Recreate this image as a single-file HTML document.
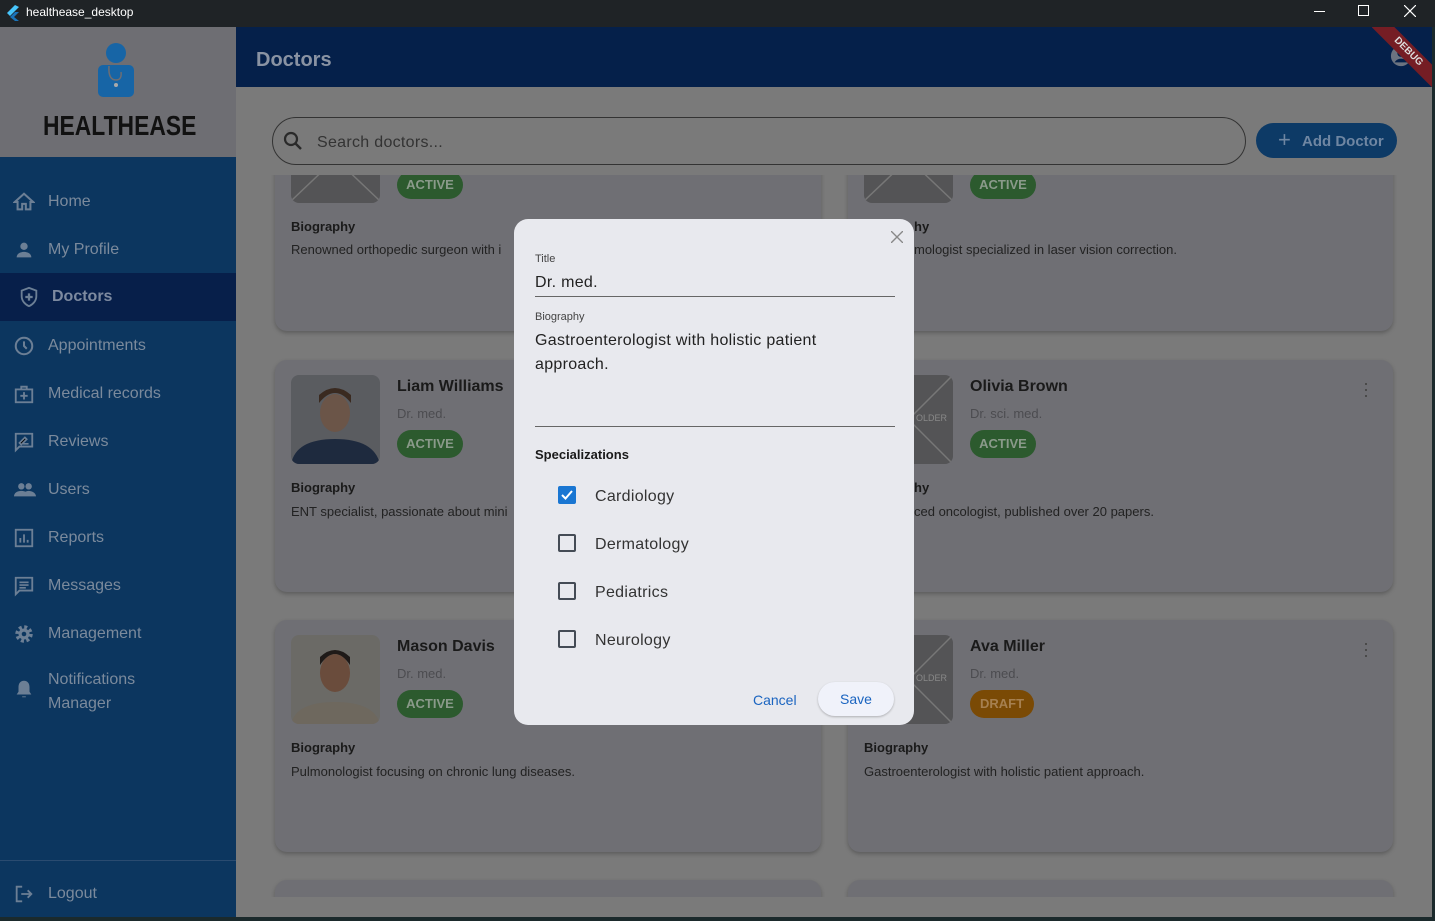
<!DOCTYPE html>
<html><head><meta charset="utf-8">
<style>
*{box-sizing:border-box;margin:0;padding:0}
body{width:1435px;height:921px;overflow:hidden;background:#1b2a2c;font-family:"Liberation Sans",sans-serif;position:relative}
.a{position:absolute}
.tb{left:0;top:0;width:1435px;height:27px;background:#1f2326;color:#fff;font-size:12px}
.side{left:0;top:27px;width:236px;height:890px;background:#0c365f}
.logo{left:0;top:27px;width:236px;height:130px;background:#6e6e73}
.nav{left:0;width:236px;height:48px;color:#7b8a9c;font-size:16px}
.nav span{position:absolute;left:48px;top:15px}
.nav svg{position:absolute;left:13px;top:13px}
.app{left:236px;top:27px;width:1196px;height:60px;background:#05204a}
.main{left:236px;top:87px;width:1196px;height:830px;background:#7a7a7a;overflow:hidden}
.card{background:#6f6f74;border-radius:12px;box-shadow:0 2px 4px rgba(0,0,0,.25)}
.ph{width:89px;height:89px;border-radius:8px;background:#545456;overflow:hidden}
.nm{font-size:16px;font-weight:bold;color:#1a1a1a}
.tt{font-size:13px;color:#4c4c50}
.badge{height:28px;border-radius:14px;color:#8a9a8a;font-size:13px;font-weight:bold;text-align:center;line-height:28px}
.bio{font-size:13px;font-weight:bold;color:#1a1a1a}
.bt{font-size:13px;color:#222}
.dlg{left:514px;top:219px;width:400px;height:506px;background:#e8e9ee;border-radius:14px}
.cb{width:18px;height:18px;border:2px solid #444b55;border-radius:2px}
.sp{font-size:16px;color:#333;letter-spacing:.3px}
</style></head><body>
<div class="a tb">
 <svg class="a" style="left:6px;top:5px" width="14" height="16" viewBox="0 0 14 16"><path d="M9 0L1 8l3 3L13 2z" fill="#47c5fb"/><path d="M9 7L4 12l5 4h4l-5-4 5-5z" fill="#1a73b9"/></svg>
 <span class="a" style="left:26px;top:5px">healthease_desktop</span>
 <div class="a" style="left:1314px;top:11px;width:11px;height:1px;background:#fff"></div>
 <div class="a" style="left:1358px;top:5px;width:11px;height:11px;border:1px solid #fff"></div>
 <svg class="a" style="left:1404px;top:5px" width="12" height="12"><path d="M0 0L12 12M12 0L0 12" stroke="#fff" stroke-width="1.2"/></svg>
</div>
<div class="a side"></div>
<div class="a logo">
 <svg class="a" style="left:96px;top:16px" width="40" height="54" viewBox="0 0 40 54"><circle cx="20" cy="10" r="10" fill="#1765a6"/><rect x="2" y="22" width="36" height="32" rx="5" fill="#1765a6"/><path d="M13 23q-1 14 7 14q6 0 5 -8" stroke="#6e6e73" fill="none" stroke-width="1.5"/><circle cx="20" cy="42" r="2" fill="#aaa"/></svg>
 <div class="a" style="left:43px;top:83px;font-size:26px;font-weight:bold;color:#111;white-space:nowrap;transform-origin:0 0;transform:scale(.88,1.05)">HEALTHEASE</div>
</div>
<div class="a nav" style="top:178px"><svg width="22" height="22" viewBox="0 0 24 24"><path d="M12 3L2 12h3v8h5v-6h4v6h5v-8h3z" fill="none" stroke="#6c7f95" stroke-width="2.2"/></svg><span>Home</span></div>
<div class="a nav" style="top:226px"><svg width="22" height="22" viewBox="0 0 24 24"><circle cx="12" cy="8" r="4" fill="#6c7f95"/><path d="M4 20c0-4 4-6 8-6s8 2 8 6z" fill="#6c7f95"/></svg><span>My Profile</span></div>
<div class="a nav" style="top:273px;background:#071f4a;color:#7d8aa0;font-weight:bold"><svg style="left:18px" width="22" height="22" viewBox="0 0 24 24"><path d="M12 2l8 3v6c0 5-3.5 9-8 11C7.5 20 4 16 4 11V5z" fill="none" stroke="#6c7f95" stroke-width="2"/><path d="M12 8v8M8 12h8" stroke="#6c7f95" stroke-width="2.5"/></svg><span style="left:52px">Doctors</span></div>
<div class="a nav" style="top:322px"><svg width="22" height="22" viewBox="0 0 24 24"><circle cx="12" cy="12" r="9" fill="none" stroke="#6c7f95" stroke-width="2.2"/><path d="M12 7v5l3 3" fill="none" stroke="#6c7f95" stroke-width="2.2"/></svg><span>Appointments</span></div>
<div class="a nav" style="top:370px"><svg width="22" height="22" viewBox="0 0 24 24"><rect x="3" y="7" width="18" height="14" fill="none" stroke="#6c7f95" stroke-width="2"/><path d="M9 7V4h6v3M12 10v8M8 14h8" fill="none" stroke="#6c7f95" stroke-width="2"/></svg><span>Medical records</span></div>
<div class="a nav" style="top:418px"><svg width="22" height="22" viewBox="0 0 24 24"><path d="M3 3h18v14H7l-4 4z" fill="none" stroke="#6c7f95" stroke-width="2"/><path d="M7 13l6-6 2 2-6 6zM11 14h6" stroke="#6c7f95" stroke-width="1.8"/></svg><span>Reviews</span></div>
<div class="a nav" style="top:466px"><svg width="24" height="22" viewBox="0 0 24 24"><circle cx="8" cy="8" r="3.5" fill="#6c7f95"/><circle cx="16" cy="8" r="3.5" fill="#6c7f95"/><path d="M0 19c0-4 4-6 8-6s8 2 8 6zM10 19c0-4 3-6 6-6s8 2 8 6z" fill="#6c7f95"/></svg><span>Users</span></div>
<div class="a nav" style="top:514px"><svg width="22" height="22" viewBox="0 0 24 24"><rect x="3" y="3" width="18" height="18" fill="none" stroke="#6c7f95" stroke-width="2"/><path d="M8 17v-5M12 17V8M16 17v-3" stroke="#6c7f95" stroke-width="2"/></svg><span>Reports</span></div>
<div class="a nav" style="top:562px"><svg width="22" height="22" viewBox="0 0 24 24"><path d="M3 3h18v14H7l-4 4z" fill="none" stroke="#6c7f95" stroke-width="2"/><path d="M7 8h10M7 11h10M7 14h7" stroke="#6c7f95" stroke-width="1.8"/></svg><span>Messages</span></div>
<div class="a nav" style="top:610px"><svg width="22" height="22" viewBox="0 0 24 24"><circle cx="12" cy="12" r="7" fill="none" stroke="#6c7f95" stroke-width="5" stroke-dasharray="3 2.5"/><circle cx="12" cy="12" r="6" fill="#6c7f95"/><circle cx="12" cy="12" r="2.5" fill="#0c365f"/></svg><span>Management</span></div>
<div class="a nav" style="top:664px;height:52px"><svg style="top:14px" width="22" height="22" viewBox="0 0 24 24"><path d="M12 3c-4 0-6 3-6 7v5l-2 3h16l-2-3v-5c0-4-2-7-6-7zM10 20h4v1h-4z" fill="#6c7f95"/></svg><span style="top:4px;line-height:24px">Notifications<br>Manager</span></div>
<div class="a" style="left:0;top:860px;width:236px;height:1px;background:#2a4b70"></div>
<div class="a nav" style="top:870px"><svg width="22" height="22" viewBox="0 0 24 24"><path d="M10 4H4v16h6M9 12h11M16 8l4 4-4 4" fill="none" stroke="#6c7f95" stroke-width="2"/></svg><span>Logout</span></div>

<div class="a app"><div class="a" style="left:20px;top:22px;font-size:20px;font-weight:bold;color:#8a93a3">Doctors</div>
 <svg class="a" style="left:1154px;top:18px" width="22" height="22" viewBox="0 0 24 24"><circle cx="12" cy="12" r="11" fill="#6c7380"/><circle cx="12" cy="9" r="4" fill="#05204a"/><path d="M5 19c2-3 4-4 7-4s5 1 7 4" fill="#05204a"/></svg>
</div>
<div class="a" style="left:1372px;top:27px;width:60px;height:60px;overflow:hidden"><div class="a" style="left:-24px;top:17px;width:120px;height:16px;background:#751d24;transform:rotate(45deg);color:#ddd;font-size:10px;font-weight:bold;text-align:center;line-height:16px">DEBUG</div></div>

<div class="a main">
 <div class="a card" style="left:39px;top:40px;width:546px;height:204px">
  <div class="a ph" style="left:16px;top:36px;height:40px;border-radius:0 0 8px 8px"><svg width="89" height="40"><path d="M0 38L40 0M49 0L89 38" stroke="#777" stroke-width="1.5"/></svg></div>
  <div class="a badge" style="left:122px;top:44px;width:66px;background:#2c5a2e">ACTIVE</div>
  <div class="a bio" style="left:16px;top:92px">Biography</div>
  <div class="a bt" style="left:16px;top:115px">Renowned orthopedic surgeon with i</div>
 </div>
 <div class="a card" style="left:612px;top:40px;width:545px;height:204px">
  <div class="a ph" style="left:16px;top:36px;height:40px;border-radius:0 0 8px 8px"><svg width="89" height="40"><path d="M0 38L40 0M49 0L89 38" stroke="#777" stroke-width="1.5"/></svg></div>
  <div class="a badge" style="left:122px;top:44px;width:66px;background:#2c5a2e">ACTIVE</div>
  <div class="a bio" style="left:66px;top:92px">hy</div>
  <div class="a bt" style="left:66px;top:115px">mologist specialized in laser vision correction.</div>
 </div>
 <div class="a card" style="left:39px;top:273px;width:546px;height:232px">
  <div class="a ph" style="left:16px;top:15px;background:#5a5c60"><svg width="89" height="89"><ellipse cx="44" cy="38" rx="15" ry="19" fill="#6b5548"/><path d="M28 28q16-20 32 0v-8q-16-14-32 0z" fill="#3a2a20"/><path d="M0 89q5-25 44-25t45 25z" fill="#1e2a3e"/></svg></div>
  <div class="a nm" style="left:122px;top:18px">Liam Williams</div>
  <div class="a tt" style="left:122px;top:46px">Dr. med.</div>
  <div class="a badge" style="left:122px;top:70px;width:66px;background:#2c5a2e">ACTIVE</div>
  <div class="a bio" style="left:16px;top:120px">Biography</div>
  <div class="a bt" style="left:16px;top:144px">ENT specialist, passionate about mini</div>
 </div>
 <div class="a card" style="left:612px;top:273px;width:545px;height:232px">
  <div class="a ph" style="left:16px;top:15px"><svg width="89" height="89"><path d="M0 89L89 0M0 0L89 89" stroke="#777" stroke-width="1.5"/></svg><span class="a" style="left:52px;top:38px;font-size:9px;color:#888">OLDER</span></div>
  <div class="a nm" style="left:122px;top:18px">Olivia Brown</div>
  <div class="a tt" style="left:122px;top:46px">Dr. sci. med.</div>
  <div class="a badge" style="left:122px;top:70px;width:66px;background:#2c5a2e">ACTIVE</div>
  <div class="a bio" style="left:66px;top:120px">hy</div>
  <div class="a bt" style="left:66px;top:144px">ced oncologist, published over 20 papers.</div>
  <div class="a" style="left:515px;top:20px;color:#444;font-size:18px;line-height:6px;width:4px">·<br>·<br>·</div>
 </div>
 <div class="a card" style="left:39px;top:533px;width:546px;height:232px">
  <div class="a ph" style="left:16px;top:15px;background:#6b6a66"><svg width="89" height="89"><ellipse cx="44" cy="38" rx="15" ry="19" fill="#6a4c3c"/><path d="M29 30q15-22 30 0v-8q-15-14-30 0z" fill="#1f1a18"/><path d="M0 89q5-22 44-22t45 22z" fill="#6e685e"/></svg></div>
  <div class="a nm" style="left:122px;top:18px">Mason Davis</div>
  <div class="a tt" style="left:122px;top:46px">Dr. med.</div>
  <div class="a badge" style="left:122px;top:70px;width:66px;background:#2c5a2e">ACTIVE</div>
  <div class="a bio" style="left:16px;top:120px">Biography</div>
  <div class="a bt" style="left:16px;top:144px">Pulmonologist focusing on chronic lung diseases.</div>
 </div>
 <div class="a card" style="left:612px;top:533px;width:545px;height:232px">
  <div class="a ph" style="left:16px;top:15px"><svg width="89" height="89"><path d="M0 89L89 0M0 0L89 89" stroke="#777" stroke-width="1.5"/></svg><span class="a" style="left:52px;top:38px;font-size:9px;color:#888">OLDER</span></div>
  <div class="a nm" style="left:122px;top:18px">Ava Miller</div>
  <div class="a tt" style="left:122px;top:46px">Dr. med.</div>
  <div class="a badge" style="left:122px;top:70px;width:64px;background:#7a4a05;color:#a68050">DRAFT</div>
  <div class="a bio" style="left:16px;top:120px">Biography</div>
  <div class="a bt" style="left:16px;top:144px">Gastroenterologist with holistic patient approach.</div>
  <div class="a" style="left:515px;top:20px;color:#444;font-size:18px;line-height:6px;width:4px">·<br>·<br>·</div>
 </div>
 <div class="a card" style="left:39px;top:793px;width:546px;height:60px"></div>
 <div class="a card" style="left:612px;top:793px;width:545px;height:60px"></div>
 <div class="a" style="left:0;top:810px;width:1196px;height:20px;background:#7a7a7a"></div>
 <div class="a" style="left:0;top:0;width:1196px;height:88px;background:#7a7a7a"></div>
 <div class="a" style="left:36px;top:30px;width:974px;height:48px;border:1.3px solid #333;border-radius:24px">
  <svg class="a" style="left:10px;top:13px" width="20" height="20" viewBox="0 0 20 20"><circle cx="8" cy="8" r="6" fill="none" stroke="#2a2a2a" stroke-width="2.2"/><path d="M12.5 12.5L18 18" stroke="#2a2a2a" stroke-width="2.4"/></svg>
  <span class="a" style="left:44px;top:16px;font-size:16px;color:#333;letter-spacing:.3px">Search doctors...</span>
 </div>
 <div class="a" style="left:1020px;top:36px;width:141px;height:35px;border-radius:18px;background:#0d3a66;color:#6f86a2;font-size:15px;font-weight:bold">
  <span class="a" style="left:22px;top:5px;font-size:22px;font-weight:normal;line-height:24px">+</span><span class="a" style="left:46px;top:10px">Add Doctor</span></div>
</div>

<div class="a dlg">
 <svg class="a" style="left:377px;top:12px" width="12" height="12"><path d="M0 0L12 12M12 0L0 12" stroke="#888" stroke-width="1.4"/></svg>
 <div class="a" style="left:21px;top:34px;font-size:11px;color:#444">Title</div>
 <div class="a" style="left:21px;top:55px;font-size:16px;color:#222;letter-spacing:.3px">Dr. med.</div>
 <div class="a" style="left:21px;top:77px;width:360px;height:1px;background:#666"></div>
 <div class="a" style="left:21px;top:92px;font-size:11px;color:#444">Biography</div>
 <div class="a" style="left:21px;top:110px;font-size:16px;color:#222;line-height:24px;letter-spacing:.3px">Gastroenterologist with holistic patient<br>approach.</div>
 <div class="a" style="left:21px;top:207px;width:360px;height:1px;background:#666"></div>
 <div class="a" style="left:21px;top:228px;font-size:13px;font-weight:bold;color:#1a1a1a">Specializations</div>
 <div class="a cb" style="left:44px;top:267px;background:#1976d2;border-color:#1976d2"><svg class="a" style="left:0;top:0" width="14" height="14"><path d="M2 7l3.5 3.5L12 3" stroke="#fff" stroke-width="2" fill="none"/></svg></div>
 <div class="a sp" style="left:81px;top:269px">Cardiology</div>
 <div class="a cb" style="left:44px;top:315px"></div><div class="a sp" style="left:81px;top:317px">Dermatology</div>
 <div class="a cb" style="left:44px;top:363px"></div><div class="a sp" style="left:81px;top:365px">Pediatrics</div>
 <div class="a cb" style="left:44px;top:411px"></div><div class="a sp" style="left:81px;top:413px">Neurology</div>
 <div class="a" style="left:239px;top:473px;font-size:14px;color:#1a64c0">Cancel</div>
 <div class="a" style="left:304px;top:463px;width:76px;height:34px;border-radius:17px;background:#f0f2fa;box-shadow:0 1px 2px rgba(0,0,0,.25);color:#1a64c0;font-size:14px;text-align:center;line-height:34px">Save</div>
</div>
</body></html>
